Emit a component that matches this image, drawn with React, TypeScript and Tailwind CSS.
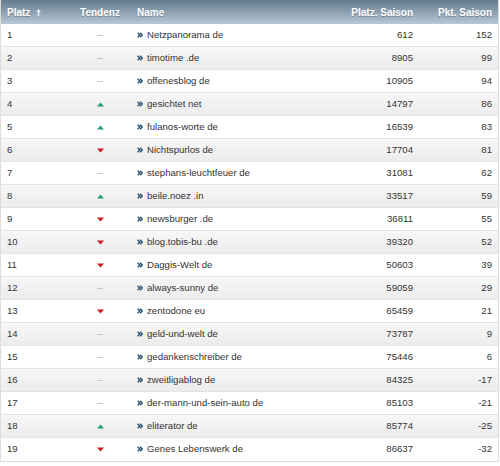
import React from "react";

type Row = {
  platz: number;
  trend: "same" | "up" | "down";
  name: string;
  saison: number;
  punkte: number;
};

const rows: Row[] = [
  { platz: 1, trend: "same", name: "Netzpanorama de", saison: 612, punkte: 152 },
  { platz: 2, trend: "same", name: "timotime .de", saison: 8905, punkte: 99 },
  { platz: 3, trend: "same", name: "offenesblog de", saison: 10905, punkte: 94 },
  { platz: 4, trend: "up", name: "gesichtet net", saison: 14797, punkte: 86 },
  { platz: 5, trend: "up", name: "fulanos-worte de", saison: 16539, punkte: 83 },
  { platz: 6, trend: "down", name: "Nichtspurlos de", saison: 17704, punkte: 81 },
  { platz: 7, trend: "same", name: "stephans-leuchtfeuer de", saison: 31081, punkte: 62 },
  { platz: 8, trend: "up", name: "beile.noez .in", saison: 33517, punkte: 59 },
  { platz: 9, trend: "down", name: "newsburger .de", saison: 36811, punkte: 55 },
  { platz: 10, trend: "down", name: "blog.tobis-bu .de", saison: 39320, punkte: 52 },
  { platz: 11, trend: "down", name: "Daggis-Welt de", saison: 50603, punkte: 39 },
  { platz: 12, trend: "same", name: "always-sunny de", saison: 59059, punkte: 29 },
  { platz: 13, trend: "down", name: "zentodone eu", saison: 65459, punkte: 21 },
  { platz: 14, trend: "same", name: "geld-und-welt de", saison: 73787, punkte: 9 },
  { platz: 15, trend: "same", name: "gedankenschreiber de", saison: 75446, punkte: 6 },
  { platz: 16, trend: "same", name: "zweitligablog de", saison: 84325, punkte: -17 },
  { platz: 17, trend: "same", name: "der-mann-und-sein-auto de", saison: 85103, punkte: -21 },
  { platz: 18, trend: "up", name: "eliterator de", saison: 85774, punkte: -25 },
  { platz: 19, trend: "down", name: "Genes Lebenswerk de", saison: 86637, punkte: -32 },
];

const Trend = ({ trend }: { trend: Row["trend"] }) => {
  if (trend === "up")
    return (
      <svg width="7" height="5" viewBox="0 0 7 5" className="inline-block">
        <polygon points="3.5,0.5 7,4.5 0,4.5" fill="#23a06c" />
      </svg>
    );
  if (trend === "down")
    return (
      <svg width="7" height="5" viewBox="0 0 7 5" className="inline-block">
        <polygon points="0,0.5 7,0.5 3.5,4.5" fill="#cf1420" />
      </svg>
    );
  return <span className="inline-block w-[6px] h-px bg-[#c4c4c4] align-middle" />;
};

// double chevron in front of each name
const Chevrons = () => (
  <svg width="6" height="6" viewBox="0 0 6 6" className="shrink-0">
    <path d="M0.7 0.7 L2.8 3 L0.7 5.3 M3.2 0.7 L5.3 3 L3.2 5.3" stroke="#2f5574" strokeWidth="1.5" fill="none" />
  </svg>
);

const App = () => {
  return (
    <div
      className="w-[500px] h-[466px] bg-white text-[9.6px] text-[#333]"
      style={{ fontFamily: '"Liberation Sans", Arial, sans-serif' }}
    >
      <div className="w-[499px] border-l border-r border-b border-[#dcdcdc]">
        {/* header */}
        <div className="flex h-[24px] items-center bg-gradient-to-b from-[#647b8e] to-[#b8c9d6] text-white text-[10px] font-bold [text-shadow:0_1px_0_rgba(0,0,0,0.25)]">
          <div className="w-[64px] pl-[6px] flex items-center gap-[6px]">
            Platz
            <svg width="5" height="7" viewBox="0 0 5 7">
              <polygon points="2.5,0 5,3 3.3,3 3.3,7 1.7,7 1.7,3 0,3" fill="#e6edf2" />
            </svg>
          </div>
          <div className="w-[70px] text-center">Tendenz</div>
          <div className="flex-1 pl-[2px]">Name</div>
          <div className="w-[110px] text-right pr-[1px]">Platz. Saison</div>
          <div className="w-[84px] text-right pr-[6px]">Pkt. Saison</div>
        </div>
        {/* rows */}
        {rows.map((row) => (
          <div
            key={row.platz}
            className={`flex h-[23px] items-center border-b border-[#e3e3e3] last:border-b-0 ${
              row.platz % 2 === 0 ? "bg-gradient-to-b from-[#f7f7f7] to-[#ececec]" : "bg-white"
            }`}
          >
            <div className="w-[64px] pl-[6px]">{row.platz}</div>
            <div className="w-[70px] flex justify-center">
              <Trend trend={row.trend} />
            </div>
            <div className="flex-1 pl-[2px] flex items-center gap-[4px]">
              <Chevrons />
              {row.name}
            </div>
            <div className="w-[110px] text-right pr-[1px]">{row.saison}</div>
            <div className="w-[84px] text-right pr-[6px]">{row.punkte}</div>
          </div>
        ))}
      </div>
    </div>
  );
};

export default App;
